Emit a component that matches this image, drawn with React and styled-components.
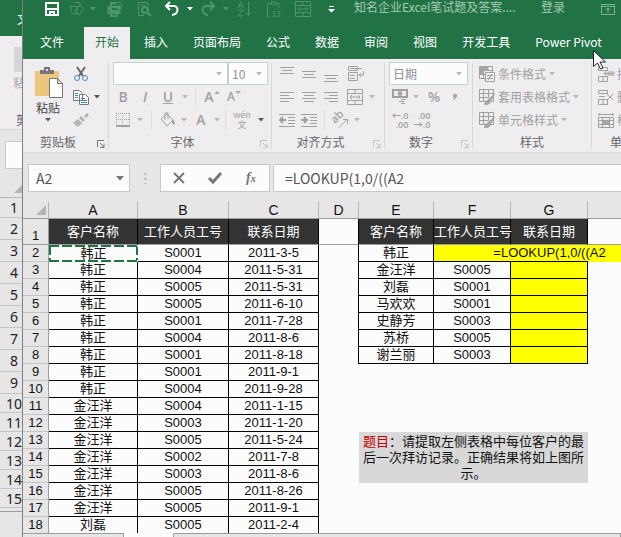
import React from "react";
import styled, { createGlobalStyle, css } from "styled-components";

const visits = [
    ['韩正', 'S0001', '2011-3-5'],
    ['韩正', 'S0004', '2011-5-31'],
    ['韩正', 'S0005', '2011-5-31'],
    ['韩正', 'S0005', '2011-6-10'],
    ['韩正', 'S0001', '2011-7-28'],
    ['韩正', 'S0004', '2011-8-6'],
    ['韩正', 'S0001', '2011-8-18'],
    ['韩正', 'S0001', '2011-9-1'],
    ['韩正', 'S0004', '2011-9-28'],
    ['金汪洋', 'S0004', '2011-1-15'],
    ['金汪洋', 'S0003', '2011-1-20'],
    ['金汪洋', 'S0005', '2011-5-24'],
    ['金汪洋', 'S0002', '2011-7-8'],
    ['金汪洋', 'S0003', '2011-8-6'],
    ['金汪洋', 'S0005', '2011-8-26'],
    ['金汪洋', 'S0005', '2011-9-1'],
    ['刘磊', 'S0005', '2011-2-4'],
];

const clients = [
    ['韩正', ''],
    ['金汪洋', 'S0005'],
    ['刘磊', 'S0001'],
    ['马欢欢', 'S0001'],
    ['史静芳', 'S0003'],
    ['苏桥', 'S0005'],
    ['谢兰丽', 'S0003'],
];

const columns = [26, 89, 91, 90, 40, 75, 77, 77];
const tabs = ['插入', '页面布局', '公式', '数据', '审阅', '视图', '开发工具', 'Power Pivot'];
const NOTE_ROW = 13;

const Icon = ({ w = 16, h = 16, children, ...rest }) => (
    <Svg width={w} height={h} viewBox={`0 0 ${w} ${h}`} {...rest}>{children}</Svg>
);

const Arrow = ({ dark }) => (
    <Icon w={6} h={4}><path d="M0 0h6L3 3.5z" fill={dark ? '#555' : '#b4bab6'} stroke="none" /></Icon>
);

const TitleArrow = () => (
    <Icon w={6} h={4}><path d="M0 0h6L3 3.5z" fill="currentColor" stroke="none" /></Icon>
);

const Lines = ({ rows }) => (
    <Icon>
        {rows.map(([x1, x2, y]) => <path key={y} d={`M${x1} ${y}.5H${x2}`} />)}
    </Icon>
);

const MergeIcon = () => (
    <Icon>
        <path d="M.5 .5h15v15H.5zM.5 4.5h15M.5 11.5h15M8 .5v4M8 11.5v4M3 8h10M5 6L3 8l2 2M11 6l2 2-2 2" />
    </Icon>
);

const Launcher = () => (
    <Icon w={8} h={8}><path d="M.5 7V.5H7M3 3l4 4M7 3.5V7.5H3" /></Icon>
);

const GridBrush = () => (
    <Icon>
        <path d="M.5 .5h14v12H.5zM.5 4.5h14M.5 8.5h10M4.5 .5v12M9.5 .5v8" />
        <path d="M15.5 5L9 11l2 2z" fill="#aaa" />
        <path d="M9 11c-2 0-2 3-4 4 3 1 6 0 6-2z" fill="#aaa" />
    </Icon>
);

const TitleBar = () => (
    <TitleRow>
        <Tool $w={33} $color="#fff" aria-label="保存">
            <Icon w={14} h={14} strokeWidth="2"><path d="M1 1h12v12H1zM1 7h12M5 13v-3h4v3" /></Icon>
        </Tool>
        <Tool $w={18} aria-label="形状">
            <Icon><path d="M5 1.5h6v4M1 5.5h7v7H3zM11 4l4 4-5 6-4-5z" /></Icon>
        </Tool>
        <Tool $w={14}><TitleArrow /></Tool>
        <Tool $w={30} aria-label="打印">
            <Icon><path d="M4 5V2h5M1.5 6h11v6h-11zM4 10h6v5H4zM2 8h3" strokeWidth="2" /><circle cx="11.5" cy="4.5" r="3.5" /><path d="M10 4.5l1 1 2-2" /></Icon>
        </Tool>
        <Tool $w={28} aria-label="预览">
            <Icon w={14}><path d="M11 5V1.5H1.5v13H7M3 4h5" /><circle cx="8" cy="9" r="3" strokeWidth="2" /><path d="M10 11l4 4" strokeWidth="2" /></Icon>
        </Tool>
        <Tool $w={28} $color="#fff" aria-label="撤消">
            <Icon><path d="M6 1L2 5l4 4M2 5h8c5 0 5 8-2 9" strokeWidth="2" /></Icon>
        </Tool>
        <Tool $w={8} $color="#fff"><TitleArrow /></Tool>
        <Tool $w={28} aria-label="恢复">
            <Icon><path d="M10 1l4 4-4 4M14 5H6c-5 0-5 8 2 9" strokeWidth="2" /></Icon>
        </Tool>
        <Tool $w={8}><TitleArrow /></Tool>
        <Tool $w={30} aria-label="排序">
            <Icon><path d="M1 7l2.500-6L6 7M2 5h3M1 9h5l-5 6h5M11.500 1v13M9 11.500l2.500 3 2.500-3" /></Icon>
        </Tool>
        <Tool $w={28} aria-label="粘贴值">
            <Icon><path d="M5 2.500H1.500v13H4M10 2.500h3V7M5 1h5v3H5z" /><text x="6" y="16" fontSize="8" fill="currentColor" stroke="none">12</text></Icon>
        </Tool>
        <Tool $w={30} aria-label="合并"><MergeIcon /></Tool>
        <Tool $w={26} $color="#fff" aria-label="自定义">
            <Icon w={7} h={8}><path d="M1 1.500h5" /><path d="M0 4h7L3.500 7.500z" fill="#fff" stroke="none" /></Icon>
        </Tool>
        <DocTitle>知名企业Excel笔试题及答案....</DocTitle>
        <SignIn>登录</SignIn>
        <Tool $w={14} $color="#7fb294" aria-label="功能区显示选项">
            <Icon w={14} h={12}><path d="M.5 1.500h13v10H.5zM.5 3.500h13M7 10V5M5 7l2-2 2 2" /></Icon>
        </Tool>
    </TitleRow>
);

const Ribbon = () => (
    <RibbonBar>
        <Group $w={86}>
            <Clipboard>
                <PasteButton>
                    <Icon w={29} h={31}>
                        <path d="M1 4h24v25H1z" fill="#eec57c" stroke="none" />
                        <path d="M6 7V3h4V0h6v3h4v4z" fill="#777" stroke="none" />
                        <circle cx="13" cy="3" r="1" fill="#fff" stroke="none" />
                        <path d="M15.500 11.500h8l5 5v14h-13zM23.500 11.500v5h5" fill="#fff" stroke="#777" />
                    </Icon>
                    粘贴
                    <Arrow dark />
                </PasteButton>
                <div>
                    <ToolRow>
                        <Tool $w={16} aria-label="剪切">
                            <Icon stroke="#666"><path d="M4 1l6 9M12 1L6 10" strokeWidth="2" /><g stroke="#4a86be"><circle cx="4" cy="12" r="2.500" /><circle cx="12" cy="12" r="2.500" /></g></Icon>
                        </Tool>
                    </ToolRow>
                    <ToolRow>
                        <Tool $w={16} aria-label="复制">
                            <Icon stroke="#777">
                                <path d="M.5 1.500h6l3 3v7h-9zM6.500 5.500h6l3 3v7h-9z" fill="#fff" />
                                <path d="M2 4.500h3M2 6.500h3M2 8.500h3M8 9.500h4M8 11.500h6M8 13.500h6" stroke="#4a86be" />
                            </Icon>
                        </Tool>
                        <Tool $w={16}><Arrow dark /></Tool>
                    </ToolRow>
                    <ToolRow>
                        <Tool $w={16} aria-label="格式刷">
                            <Icon><path d="M14 1l2 2-3 3-2-2zM8 4l4 4-2 2-4-4zM5 7l4 4-4 4-5-4z" fill="#b4b4b4" stroke="none" /></Icon>
                        </Tool>
                    </ToolRow>
                </div>
            </Clipboard>
            <GroupLabel $dark>剪贴板<Launcher /></GroupLabel>
        </Group>
        <Group $w={163}>
            <ToolRow>
                <Combo $w={115}><Select aria-label="字体"><option></option></Select><Arrow /></Combo>
                <Combo $w={40}><Select aria-label="字号"><option>10</option></Select><Arrow /></Combo>
            </ToolRow>
            <ToolRow>
                <Tool $w={20}><Letter $bold>B</Letter></Tool>
                <Tool $w={24}><Letter $bold $italic>I</Letter></Tool>
                <Tool $w={22}><Letter $bold $underline>U</Letter></Tool>
                <Tool $w={12}><Arrow /></Tool>
                <Divider />
                <Tool $w={22}><Letter $bold>A</Letter><Icon w={6} h={12}><path d="M0 3h6L3 0z" fill="#aaa" stroke="none" /></Icon></Tool>
                <Tool $w={22}><Letter $bold $small>A</Letter><Icon w={6} h={12}><path d="M0 0h6L3 3z" fill="#aaa" stroke="none" /></Icon></Tool>
            </ToolRow>
            <ToolRow>
                <Tool $w={20} aria-label="边框">
                    <Icon w={14} h={14}><path d="M0 .5h14M0 6.500h14M.5 0v12M6.500 0v12M13.500 0v12" strokeDasharray="1 1" /><path d="M0 13h14" strokeWidth="2" /></Icon>
                </Tool>
                <Tool $w={14}><Arrow /></Tool>
                <Divider />
                <Tool $w={22} aria-label="填充颜色">
                    <Icon><path d="M1 7l6-5 6 6-6 6zM5 8V1h3v6" /><path d="M13 8c1 2 2 3 1 4s-2-1-1-4z" fill="#aaa" /></Icon>
                </Tool>
                <Tool $w={10}><Arrow /></Tool>
                <Tool $w={24}><Letter $bold>A</Letter></Tool>
                <Tool $w={8}><Arrow /></Tool>
                <Divider />
                <Tool $w={22}><Pinyin><span>wén</span><span>文</span></Pinyin></Tool>
                <Tool $w={16}><Arrow dark /></Tool>
            </ToolRow>
            <GroupLabel>字体<Launcher /></GroupLabel>
        </Group>
        <Group $w={113}>
            <ToolRow>
                <Tool $w={22}><Lines rows={[[1, 15, 1], [3, 13, 4], [1, 15, 7]]} /></Tool>
                <Tool $w={22}><Lines rows={[[1, 15, 5], [3, 13, 8], [1, 15, 11]]} /></Tool>
                <Tool $w={22}><Lines rows={[[1, 15, 9], [3, 13, 12], [1, 15, 15]]} /></Tool>
                <Tool $w={28} aria-label="自动换行">
                    <Icon><path d="M.5 .5h9v4h-9zM.5 6.500h9v8h-9zM2 2.500h12M2 9.500h5M2 12.500h5M15.500 5v4H11M13 7l-2 2 2 2" /></Icon>
                </Tool>
            </ToolRow>
            <ToolRow>
                <Tool $w={22}><Lines rows={[[1, 15, 3], [1, 10, 6], [1, 15, 9], [1, 10, 12]]} /></Tool>
                <Tool $w={22}><Lines rows={[[1, 15, 3], [3, 13, 6], [1, 15, 9], [3, 13, 12]]} /></Tool>
                <Tool $w={22}><Lines rows={[[1, 15, 3], [6, 15, 6], [1, 15, 9], [6, 15, 12]]} /></Tool>
                <Tool $w={26} aria-label="合并后居中"><MergeIcon /></Tool>
                <Tool $w={8}><Arrow /></Tool>
            </ToolRow>
            <ToolRow>
                <Tool $w={22} aria-label="减少缩进">
                    <Icon><path d="M0 2.500h16M9 5.500h7M9 8.500h7M9 11.500h7M0 14.500h16" /><path d="M7 8H1M4 5L1 8l3 3" strokeWidth="2" /></Icon>
                </Tool>
                <Tool $w={22} aria-label="增加缩进">
                    <Icon><path d="M0 2.500h16M9 5.500h7M9 8.500h7M9 11.500h7M0 14.500h16" /><path d="M0 8h6M3 5l3 3-3 3" strokeWidth="2" /></Icon>
                </Tool>
                <Divider />
                <Tool $w={20} aria-label="方向">
                    <Icon><text x="3" y="12" fontSize="11" fontFamily="Open Sans" fontWeight="600" transform="rotate(-45 3 12)" fill="currentColor" stroke="none">ab</text><path d="M7 15.500l8-8M11 7.500h4.500v4" /></Icon>
                </Tool>
                <Tool $w={14}><Arrow /></Tool>
            </ToolRow>
            <GroupLabel>对齐方式<Launcher /></GroupLabel>
        </Group>
        <Group $w={88}>
            <ToolRow>
                <Combo $w={79}><Select aria-label="数字格式"><option>日期</option></Select><Arrow /></Combo>
            </ToolRow>
            <ToolRow>
                <Tool $w={22} aria-label="会计数字格式">
                    <Icon><path d="M1 1h14v7H1z" strokeWidth="2" /><circle cx="8" cy="4.500" r="2" fill="#aaa" /><path d="M9 10.500h5M7 12.500h5M9 14.500h4" /></Icon>
                </Tool>
                <Tool $w={10}><Arrow /></Tool>
                <Tool $w={26}><Letter $bold>%</Letter></Tool>
                <Tool $w={16} aria-label="千位分隔">
                    <Icon w={6} h={10}><path d="M1 2h4v3L2 8H1l1-3H1z" fill="#aaa" stroke="none" /></Icon>
                </Tool>
            </ToolRow>
            <ToolRow>
                <Tool $w={22}><Decimals><span>←.0</span><span>.00</span></Decimals></Tool>
                <Tool $w={22}><Decimals><span>.00</span><span>→.0</span></Decimals></Tool>
            </ToolRow>
            <GroupLabel>数字<Launcher /></GroupLabel>
        </Group>
        <Group $w={119}>
            <StyleButton>
                <Icon><path d="M.5 .5h13v12H.5zM.5 4.500h13M.5 8.500h6M4.500 .5v12" /><path d="M1 1h8v3H1zM1 5h3v3H1z" fill="#aaa" /><path d="M6.500 6.500h9v9h-9z" fill="#f0edf0" /><path d="M8 9.500h6M8 12.500h6M13 8l-4 6" /></Icon>
                条件格式<Arrow />
            </StyleButton>
            <StyleButton><GridBrush />套用表格格式<Arrow /></StyleButton>
            <StyleButton><GridBrush />单元格样式<Arrow /></StyleButton>
            <StylesLabel>样式</StylesLabel>
        </Group>
        <Group $w={84}>
            <StyleButton>
                <Icon><path d="M.5 1.500h9v3h-9zM.5 10.500h9v5h-9zM5 10v5M6 7.500h9M9 4.500L6 7.500l3 3M10 6h6v3h-6z" /></Icon>插入
            </StyleButton>
            <StyleButton>
                <Icon><path d="M.5 1.500h9v3h-9zM.5 10.500h9v5h-9zM5 10v5M1 7.500h6M9 5l6 6M15 5l-6 6" /></Icon>删除
            </StyleButton>
            <StyleButton>
                <Icon><path d="M1 1v3M15 1v3M1 2.500h14M.5 5.500h15v10H.5zM.5 8.500h15M.5 12.500h15M4.500 5v10M11.500 5v10" /><path d="M5 9h6v3H5z" fill="#aaa" /></Icon>格式
            </StyleButton>
            <CellsLabel>单元格</CellsLabel>
        </Group>
    </RibbonBar>
);

const Sheet = () => (
    <Table>
        <colgroup>
            {columns.map((w, i) => <Col key={i} $w={w} />)}
            <col />
        </colgroup>
        <thead>
            <tr>
                <ColHead><Icon w={10} h={10}><path d="M10 0v10H0z" fill="#b4b4b4" stroke="none" /></Icon></ColHead>
                {['A', 'B', 'C', 'D', 'E', 'F', 'G', ''].map(name => <ColHead key={name}>{name}</ColHead>)}
            </tr>
        </thead>
        <tbody>
            <tr>
                <RowHead $tall>1</RowHead>
                <DarkCell>客户名称</DarkCell>
                <DarkCell>工作人员工号</DarkCell>
                <DarkCell>联系日期</DarkCell>
                <FrozenCell $edge />
                <DarkCell>客户名称</DarkCell>
                <DarkCell>工作人员工号</DarkCell>
                <DarkCell>联系日期</DarkCell>
                <FrozenCell />
            </tr>
            {visits.map(([name, id, date], i) => {
                const row = i + 2;
                const client = clients[i];
                return (
                    <tr key={row}>
                        <RowHead>{row}</RowHead>
                        <Cell $line $marching={row === 2}>{name}</Cell>
                        <Cell $line>{id}</Cell>
                        <Cell $line>{date}</Cell>
                        <Cell $edge={!!client} />
                        {client && <Cell $line>{client[0]}</Cell>}
                        {client && row > 2 && <Cell $line>{client[1]}</Cell>}
                        {client && row > 2 && <Cell $line $yellow />}
                        {row === 2 && (
                            <>
                                <Cell $yellow $under />
                                <Cell $yellow $under><Editing>=LOOKUP(1,0/((A2</Editing></Cell>
                                <Cell $yellow />
                            </>
                        )}
                        {row === NOTE_ROW && (
                            <NoteCell colSpan={3} rowSpan={3}><b>题目</b>：请提取左侧表格中每位客户的最后一次拜访记录。正确结果将如上图所示。</NoteCell>
                        )}
                    </tr>
                );
            })}
        </tbody>
    </Table>
);

const BackWindow = () => (
    <Back>
        <BackGreen>文件</BackGreen>
        <BackRibbon>
            <BackPaste />
            <BackText>粘贴</BackText>
            <BackGroup>剪贴板</BackGroup>
        </BackRibbon>
        <BackFormula><span /></BackFormula>
        <BackCorner><Icon w={8} h={8}><path d="M8 0v8H0z" fill="#b4b4b4" stroke="none" /></Icon></BackCorner>
        {Array.from({ length: 15 }, (_, i) => (
            <BackRow key={i} $h={i === 0 ? 20 : i < 9 ? 22 : 19}>{i + 1}</BackRow>
        ))}
        <BackFoot />
    </Back>
);

const App = () => (
    <Desktop>
        <GlobalStyle />
        <BackWindow />
        <Front>
            <TitleBar />
            <TabBar>
                <FileTab>文件</FileTab>
                <Tab $active>开始</Tab>
                {tabs.map(name => <Tab key={name}>{name}</Tab>)}
            </TabBar>
            <Ribbon />
            <FormulaBar>
                <NameBox>
                    <BarInput aria-label="名称框" defaultValue="A2" />
                    <Icon w={8} h={5}><path d="M0 0h8L4 4.500z" fill="#777" stroke="none" /></Icon>
                </NameBox>
                <Grip><Icon w={3} h={12}><path d="M1.500 1v11" strokeWidth="2" strokeDasharray="2 3" /></Icon></Grip>
                <FormulaTools>
                    <Tool $w={36} $color="#777" aria-label="取消"><Icon w={12} h={12}><path d="M1 1l10 10M11 1L1 11" strokeWidth="2" /></Icon></Tool>
                    <Tool $w={36} $color="#777" aria-label="输入"><Icon w={14} h={12}><path d="M1 6l4 4 8-9" strokeWidth="3" /></Icon></Tool>
                    <Tool $w={36} $color="#777" aria-label="插入函数"><Fx>f<small>x</small></Fx></Tool>
                </FormulaTools>
                <FormulaField>
                    <BarInput aria-label="编辑栏" defaultValue="=LOOKUP(1,0/((A2" />
                </FormulaField>
            </FormulaBar>
            <SheetArea><Sheet /></SheetArea>
            <SheetTabs><SheetTab $w={101} /><SheetTab $w={50} $active /><SheetTab /></SheetTabs>
        </Front>
        <Pointer width="13" height="20" viewBox="0 0 13 20">
            <path d="M.5 .5v16l4-3.500 3 6 2.500-1-3-6h5.500z" fill="#fff" stroke="#222" />
        </Pointer>
    </Desktop>
);

export default App;

const GlobalStyle = createGlobalStyle`
    * {
        box-sizing: border-box;
    }
    body {
        margin: 0;
        overflow: hidden;
        font: 12px/16px "Noto Sans CJK SC", sans-serif;
        background: #e6e6e6;
    }
    button, input, select {
        font: inherit;
        padding: 0;
        border: none;
        background: none;
    }
`

const Svg = styled.svg`
    flex: none;
    display: block;
    overflow: visible;
    fill: none;
    stroke: ${({stroke}) => stroke || 'currentColor'};
`

const Desktop = styled.div`
    position: relative;
    display: flex;
    height: 100vh;
    overflow: hidden;
`

const Front = styled.main`
    flex: 1;
    min-width: 0;
    display: flex;
    flex-direction: column;
    border-left: 1px solid #808080;
    background: #fcfcfc;
`

const Pointer = styled.svg`
    position: absolute;
    left: 593px;
    top: 50px;
`

const Tool = styled.button`
    flex: none;
    display: flex;
    align-items: center;
    justify-content: center;
    width: ${({$w}) => $w}px;
    height: 100%;
    color: ${({$color}) => $color || 'inherit'};
`

const TitleRow = styled.header`
    flex: none;
    display: flex;
    align-items: center;
    height: 27px;
    padding: 0 6px 10px 12px;
    color: #4f9570;
    background: #217346;
`

const DocTitle = styled.div`
    flex: 1;
    min-width: 0;
    padding: 0 0 4px 10px;
    white-space: nowrap;
    line-height: 14px;
    color: #a5cbb4;
`

const SignIn = styled.button`
    margin-right: 36px;
    padding-bottom: 4px;
    line-height: 14px;
    color: #a5cbb4;
`

const TabBar = styled.nav`
    flex: none;
    display: flex;
    gap: 3px;
    height: 32px;
    padding-left: 6px;
    background: #217346;
`

const Tab = styled.button`
    flex: none;
    padding: 0 11px 2px;
    color: ${({$active}) => $active ? '#217346' : '#fff'};
    background: ${({$active}) => $active ? '#f0edf0' : 'none'};
`

const FileTab = styled(Tab)`
    margin-right: 6px;
`

const RibbonBar = styled.section`
    flex: none;
    display: flex;
    height: 94px;
    overflow: hidden;
    color: #a0a0a0;
    background: #f0edf0;
    border-bottom: 1px solid #d8dad8;
`

const Group = styled.div`
    flex: none;
    width: ${({$w}) => $w}px;
    padding: 3px 0 0 4px;
    background: linear-gradient(#d3dcd7, #d3dcd7) right 4px / 1px 86px no-repeat;
`

const ToolRow = styled.div`
    display: flex;
    align-items: center;
    height: 23px;
`

const GroupLabel = styled.div`
    display: grid;
    grid-template-columns: 1fr auto 1fr;
    align-items: center;
    height: 22px;
    padding-right: 20px;
    color: #666;

    &::before {
        content: "";
    }

    svg {
        justify-self: end;
        margin: 4px -16px 0 0;
        color: ${({$dark}) => $dark ? '#777' : '#bbc4bf'};
    }
`

const StylesLabel = styled.div`
    padding-left: 43px;
    line-height: 22px;
    color: #666;
`

const CellsLabel = styled(StylesLabel)`
    padding-left: 14px;
`

const Clipboard = styled.div`
    display: flex;
    gap: 4px;
`

const PasteButton = styled.button`
    display: flex;
    flex-direction: column;
    align-items: center;
    gap: 2px;
    width: 42px;
    height: 69px;
    padding-top: 5px;
    color: #444;
`

const Combo = styled.span`
    display: flex;
    align-items: center;
    width: ${({$w}) => $w}px;
    height: 23px;
    padding: 0 5px 0 3px;
    border: 1px solid #c3d2ca;
    background: #fcfcfc;
`

const Select = styled.select`
    flex: 1;
    min-width: 0;
    appearance: none;
    color: #8e939a;
`

const Letter = styled.span`
    font: ${({$bold}) => $bold ? 600 : 400} ${({$small}) => $small ? 12 : 14}px/16px "Open Sans", sans-serif;
    font-style: ${({$italic}) => $italic ? 'italic' : 'normal'};
    text-decoration: ${({$underline}) => $underline ? 'underline' : 'none'};
`

const Divider = styled.span`
    flex: none;
    width: 1px;
    height: 20px;
    margin: 0 5px 0 4px;
    background: #d8dfdb;
`

const Pinyin = styled.span`
    display: flex;
    flex-direction: column;
    align-items: center;
    font-size: 9px;
    line-height: 10px;
`

const Decimals = styled.span`
    display: flex;
    flex-direction: column;
    align-items: flex-end;
    font: 600 9px/9px "Open Sans", "Noto Sans CJK SC", sans-serif;

    span {
        height: 9px;
    }
`

const StyleButton = styled.button`
    display: flex;
    align-items: center;
    gap: 3px;
    height: 23px;
    padding-left: 2px;
    white-space: nowrap;
    color: #a0a0a0;
`

const FormulaBar = styled.section`
    flex: none;
    display: flex;
    height: 49px;
    padding: 11px 0 10px 5px;
    background: #e6e6e6;
`

const NameBox = styled.div`
    display: flex;
    align-items: center;
    width: 102px;
    padding: 0 5px 0 7px;
    border: 1px solid #c8c8c8;
    background: #fcfcfc;
`

const BarInput = styled.input`
    flex: 1;
    min-width: 0;
    outline: none;
    font: 14px/20px "Noto Sans CJK SC", sans-serif;
    color: #555;
`

const Grip = styled.span`
    display: flex;
    align-items: center;
    justify-content: center;
    width: 30px;
    color: #b0b0b0;
`

const FormulaTools = styled.div`
    display: flex;
    width: 110px;
    border: 1px solid #c8c8c8;
    background: #fcfcfc;
`

const Fx = styled.i`
    font: italic 700 14px/16px "Liberation Serif", serif;

    small {
        font-size: 11px;
    }
`

const FormulaField = styled.div`
    flex: 1;
    display: flex;
    margin-left: 3px;
    padding-left: 11px;
    border: 1px solid #c8c8c8;
    border-right: none;
    background: #fcfcfc;
`

const SheetArea = styled.section`
    flex: 1;
    min-height: 0;
    overflow: hidden;
`

const Table = styled.table`
    width: 100%;
    table-layout: fixed;
    border-collapse: separate;
    border-spacing: 0;
    font: 13px/16px "Liberation Sans", "Noto Sans CJK SC", sans-serif;
    color: #111;
`

const Col = styled.col`
    width: ${({$w}) => $w}px;
`

const ColHead = styled.th`
    height: 17px;
    padding: 0;
    font-weight: 400;
    font-size: 14px;
    background: #e6e6e6;
    border-right: 1px solid #b4b4b4;
    border-bottom: 1px solid #9c9c9c;

    &:last-child {
        border-right: none;
    }

    svg {
        margin-left: 13px;
    }
`

const RowHead = styled.th`
    height: ${({$tall}) => $tall ? 26 : 17}px;
    padding: 0;
    vertical-align: bottom;
    font-weight: 400;
    background: #e6e6e6;
    border-right: 1px solid #9c9c9c;
    border-bottom: 1px solid ${({$tall}) => $tall ? '#9c9c9c' : '#c4c4c4'};
`

const FrozenCell = styled.td`
    padding: 0;
    border-bottom: 1px solid #9c9c9c;
    border-right: ${({$edge}) => $edge ? '1px solid #000' : 'none'};
`

const DarkCell = styled(FrozenCell)`
    text-align: center;
    white-space: nowrap;
    color: #fff;
    background: #333;
    border-right: 1px solid #000;
`

const dash = '#217346 0 10px, #fff 10px 13px';

const Cell = styled.td`
    height: 17px;
    padding: 0;
    text-align: center;
    white-space: nowrap;
    background: ${({$yellow}) => $yellow ? '#ff0' : 'none'};
    border-right: ${({$line, $edge}) => $line || $edge ? '1px solid #000' : 'none'};
    border-bottom: ${({$line, $under}) => $line || $under ? '1px solid #000' : 'none'};
    ${({$marching}) => $marching && css`
        border-width: 0;
        background:
            repeating-linear-gradient(90deg, ${dash}) top / 100% 2px no-repeat,
            repeating-linear-gradient(90deg, ${dash}) bottom / 100% 2px no-repeat,
            repeating-linear-gradient(${dash}) left / 2px 100% no-repeat,
            repeating-linear-gradient(${dash}) right / 2px 100% no-repeat;
    `}
`

const Editing = styled.div`
    display: flex;
    justify-content: center;
    white-space: nowrap;
`

const NoteCell = styled.td`
    padding: 0 2px;
    text-align: center;
    background: #d8d8d8;

    b {
        font-weight: 400;
        color: #c00000;
    }
`

const SheetTabs = styled.footer`
    flex: none;
    display: flex;
    height: 4px;
`

const SheetTab = styled.span`
    flex: ${({$w}) => $w ? `0 0 ${$w}px` : 1};
    border-top: 1px solid ${({$active}) => $active ? '#fcfcfc' : '#9c9c9c'};
    border-right: 1px solid #9c9c9c;
    background: ${({$active}) => $active ? '#fcfcfc' : '#e6e6e6'};
`

const Back = styled.aside`
    flex: none;
    width: 22px;
    display: flex;
    flex-direction: column;
    overflow: hidden;
    white-space: nowrap;
    background: #e6e6e6;
`

const BackGreen = styled.div`
    height: 36px;
    padding: 11px 0 0 17px;
    color: #fff;
    background: #217346;
`

const BackRibbon = styled.div`
    height: 94px;
    padding-top: 11px;
    background: #f0edf0;
    border-bottom: 1px solid #d8dad8;
`

const BackPaste = styled.div`
    height: 25px;
    margin-left: 14px;
    background: #d6d6d6;
`

const BackText = styled.div`
    padding: 3px 0 0 13px;
    color: #aaa;
`

const BackGroup = styled.div`
    padding: 21px 0 0 16px;
    color: #666;
`

const BackFormula = styled.div`
    display: flex;
    height: 49px;
    padding: 11px 0 10px 5px;

    span {
        flex: 1;
        border: 1px solid #c8c8c8;
        border-right: none;
        background: #fcfcfc;
    }
`

const BackCorner = styled.div`
    display: flex;
    align-items: flex-end;
    justify-content: flex-end;
    height: 19px;
    padding-bottom: 4px;
    border-bottom: 1px solid #b4b4b4;
`

const BackRow = styled.div`
    flex: none;
    height: ${({$h}) => $h}px;
    padding-left: 6px;
    text-align: center;
    font: 14px/${({$h}) => $h}px "Noto Sans", sans-serif;
    color: #222;
    border-bottom: 1px solid #c4c4c4;
`

const BackFoot = styled.div`
    flex: 1;
    margin-top: 3px;
    border-top: 1px solid #9c9c9c;
`
